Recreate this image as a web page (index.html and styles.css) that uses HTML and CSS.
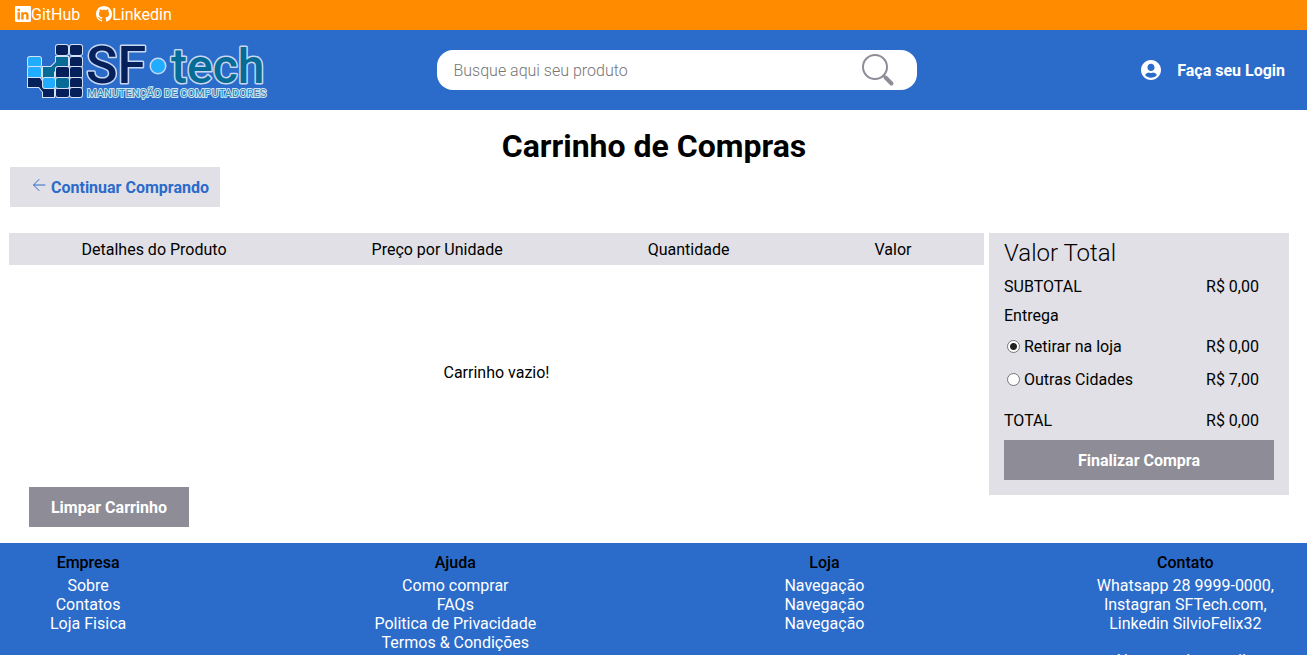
FILE: index.html
```html
<!DOCTYPE html>
<html lang="pt-BR">
<head>
<meta charset="utf-8">
<meta name="viewport" content="width=device-width, initial-scale=1">
<title>SF Tech - Carrinho de Compras</title>
<link rel="stylesheet" href="styles.css">
</head>
<body>
<nav class="social-bar">
  <a class="social-link" href="#github">
    <svg width="16" height="16" viewBox="0 0 16 16" fill="currentColor" aria-hidden="true"><path d="M0 1.146C0 .513.526 0 1.175 0h13.65C15.474 0 16 .513 16 1.146v13.708c0 .633-.526 1.146-1.175 1.146H1.175C.526 16 0 15.487 0 14.854V1.146zm4.943 12.248V6.169H2.542v7.225h2.401zm-1.2-8.212c.837 0 1.358-.554 1.358-1.248-.015-.709-.52-1.248-1.342-1.248-.822 0-1.359.54-1.359 1.248 0 .694.521 1.248 1.327 1.248h.016zm4.908 8.212V9.359c0-.216.016-.432.08-.586.173-.431.568-.878 1.232-.878.869 0 1.216.662 1.216 1.634v3.865h2.401V9.25c0-2.22-1.184-3.252-2.764-3.252-1.274 0-1.845.7-2.165 1.193v.025h-.016a5.54 5.54 0 0 1 .016-.025V6.169h-2.4c.03.678 0 7.225 0 7.225h2.4z"/></svg>
    <span>GitHub</span>
  </a>
  <a class="social-link" href="#linkedin">
    <svg width="16" height="16" viewBox="0 0 16 16" fill="currentColor" aria-hidden="true"><path d="M8 0C3.58 0 0 3.58 0 8c0 3.54 2.29 6.53 5.47 7.59.4.07.55-.17.55-.38 0-.19-.01-.82-.01-1.49-2.01.37-2.53-.49-2.69-.94-.09-.23-.48-.94-.82-1.13-.28-.15-.68-.52-.01-.53.63-.01 1.08.58 1.23.82.72 1.21 1.87.87 2.33.66.07-.52.28-.87.51-1.07-1.78-.2-3.64-.89-3.64-3.95 0-.87.31-1.59.82-2.15-.08-.2-.36-1.02.08-2.12 0 0 .67-.21 2.2.82.64-.18 1.32-.27 2-.27.68 0 1.36.09 2 .27 1.53-1.04 2.2-.82 2.2-.82.44 1.1.16 1.92.08 2.12.51.56.82 1.27.82 2.15 0 3.07-1.87 3.75-3.65 3.95.29.25.54.73.54 1.48 0 1.07-.01 1.93-.01 2.2 0 .21.15.46.55.38A8.012 8.012 0 0 0 16 8c0-4.42-3.58-8-8-8z"/></svg>
    <span>Linkedin</span>
  </a>
</nav>

<header class="header">
  <a class="logo" href="#inicio" aria-label="SF tech">
    <svg width="244" height="64" viewBox="24 38 244 64">
      <g class="logo-tiles">
        <g class="logo-light"><rect x="28" y="57" width="13" height="10" rx="2"/><rect x="28" y="67" width="13" height="11" rx="2"/></g>
        <path class="logo-navy" d="M28 78h12l5 8v2h9v9H43v-5l-4-5H28z"/>
        <path class="logo-teal" d="M43 67h8l5-5v-5h12v10h-9l-5 5v6H43z"/>
        <rect class="logo-light" x="43" y="78" width="12" height="10" rx="2"/>
        <g class="logo-navy"><rect x="56" y="45" width="12" height="10" rx="2"/><rect x="70" y="45" width="12" height="10" rx="2"/><rect x="70" y="57" width="12" height="10" rx="2"/><rect x="56" y="67" width="13" height="11" rx="2"/><rect x="70" y="67" width="12" height="11" rx="2"/><rect x="70" y="78" width="12" height="10" rx="2"/><rect x="56" y="88" width="13" height="9" rx="2"/><rect x="70" y="88" width="12" height="9" rx="2"/></g>
        <rect class="logo-teal" x="56" y="78" width="13" height="10" rx="2"/>
      </g>
      <text class="logo-word logo-navy" x="86" y="83" font-size="52">SF</text>
      <circle class="logo-dot logo-light" cx="158" cy="66" r="7"/>
      <text class="logo-word logo-teal" x="171" y="83" font-size="48">tech</text>
      <text class="logo-tag" x="87" y="97" font-size="11">MANUTENÇÃO DE COMPUTADORES</text>
    </svg>
  </a>
  <form class="search" role="search">
    <input class="search-input" type="search" placeholder="Busque aqui seu produto" aria-label="Busque aqui seu produto">
    <button class="search-button" type="button" aria-label="Buscar">
      <svg width="34" height="34" viewBox="0 0 34 34" fill="none" stroke="currentColor" stroke-linecap="round" aria-hidden="true"><circle cx="14" cy="14" r="12" stroke-width="2"/><path d="M22.500 22.500L24 24" stroke-width="2"/><path d="M24.500 24.500l6 6" stroke-width="4"/></svg>
    </button>
  </form>
  <a class="login" href="#login">
    <svg width="20" height="20" viewBox="0 8 496 496" fill="currentColor" aria-hidden="true"><path d="M248 8C111 8 0 119 0 256s111 248 248 248 248-111 248-248S385 8 248 8zm0 96c48.600 0 88 39.400 88 88s-39.400 88-88 88-88-39.400-88-88 39.400-88 88-88zm0 344c-58.700 0-111.300-26.600-146.500-68.200 18.800-35.400 55.600-59.800 98.500-59.800 2.400 0 4.800.4 7.100 1.100 13 4.200 26.600 6.900 40.900 6.900 14.300 0 28-2.700 40.900-6.900 2.300-.7 4.700-1.100 7.100-1.100 42.900 0 79.700 24.400 98.500 59.800C359.300 421.400 306.700 448 248 448z"/></svg>
    <span>Faça seu Login</span>
  </a>
</header>

<main class="main">
  <h1 class="title">Carrinho de Compras</h1>
  <a class="continue" href="#produtos">
    <svg class="continue-icon" width="16" height="16" viewBox="0 0 16 16" fill="none" stroke="currentColor" stroke-linecap="round" stroke-linejoin="round" aria-hidden="true"><path d="M14 8H3M8 2.500L2.500 8 8 13.500"/></svg>
    <span>Continuar Comprando</span>
  </a>
  <div class="cart">
    <section class="cart-list">
      <div class="cart-head">
        <span>Detalhes do Produto</span>
        <span>Preço por Unidade</span>
        <span>Quantidade</span>
        <span>Valor</span>
      </div>
      <p class="cart-empty">Carrinho vazio!</p>
      <button class="button button-clear" type="button">Limpar Carrinho</button>
    </section>
    <aside class="summary">
      <h2 class="summary-title">Valor Total</h2>
      <div class="summary-row"><span>SUBTOTAL</span><span>R$ 0,00</span></div>
      <p class="summary-label">Entrega</p>
      <div class="summary-row summary-option">
        <label class="option"><input class="radio" type="radio" name="entrega" checked><span>Retirar na loja</span></label>
        <span>R$ 0,00</span>
      </div>
      <div class="summary-row summary-option">
        <label class="option"><input class="radio" type="radio" name="entrega"><span>Outras Cidades</span></label>
        <span>R$ 7,00</span>
      </div>
      <div class="summary-row summary-total"><span>TOTAL</span><span>R$ 0,00</span></div>
      <button class="button button-checkout" type="button">Finalizar Compra</button>
    </aside>
  </div>
</main>

<footer class="footer">
  <div class="footer-col footer-nav">
    <h3 class="footer-title">Empresa</h3>
    <a href="#sobre">Sobre</a><a href="#contatos">Contatos</a><a href="#loja">Loja Fisica</a>
  </div>
  <div class="footer-col footer-nav">
    <h3 class="footer-title">Ajuda</h3>
    <a href="#comprar">Como comprar</a><a href="#faqs">FAQs</a><a href="#privacidade">Politica de Privacidade</a><a href="#termos">Termos &amp; Condições</a>
  </div>
  <div class="footer-col footer-nav">
    <h3 class="footer-title">Loja</h3>
    <a href="#nav1">Navegação</a><a href="#nav2">Navegação</a><a href="#nav3">Navegação</a>
  </div>
  <div class="footer-col">
    <h3 class="footer-title">Contato</h3>
    <span>Whatsapp 28 9999-0000,</span><span>Instagran SFTech.com,</span><span>Linkedin SilvioFelix32</span>
    <span class="footer-note">Nos mande e-mails</span>
  </div>
</footer>
</body>
</html>
```

FILE: styles.css
```css
* {
  box-sizing: border-box;
  margin: 0;
  padding: 0;
}

body {
  background: #fff;
  color: #000;
  font: 16px/19px Roboto, "Liberation Sans", sans-serif;
}

a {
  color: inherit;
  text-decoration: none;
}

button,
input {
  border: 0;
  font: inherit;
}

.social-bar {
  display: flex;
  gap: 16px;
  height: 30px;
  padding: 0 15px 2px;
  align-items: center;
  background: #ff8c00;
  color: #fff;
}

.social-link {
  display: flex;
  align-items: center;
}

.header {
  display: grid;
  grid-template-columns: 9fr 480px 8fr;
  align-items: center;
  height: 80px;
  padding: 0 22px 0 24px;
  background: #2b6bca;
  color: #fff;
}

.logo,
.logo svg {
  display: block;
}

.logo-tiles {
  stroke: #d5e2f5;
  stroke-width: 2;
  paint-order: stroke;
}

.logo-navy {
  fill: #06205c;
}

.logo-teal {
  fill: #066c96;
}

.logo-light {
  fill: #20acff;
}

.logo-dot,
.logo-word {
  paint-order: stroke;
  stroke: #c6d8f2;
  stroke-width: 3;
  stroke-linejoin: round;
}

.logo-word {
  font-weight: 500;
}

.logo-tag {
  fill: #2a86b4;
  paint-order: stroke;
  stroke: #d0e6f6;
  stroke-width: 2;
  stroke-linejoin: round;
}

.search {
  display: flex;
  align-items: center;
  height: 40px;
  padding: 0 22px 0 16px;
  border-radius: 16px;
  background: #fff;
}

.search-input {
  flex: 1;
  min-width: 0;
  height: 40px;
  outline: 0;
  background: none;
  font-weight: 300;
}

.search-input::placeholder {
  color: #757575;
}

.search-button {
  display: flex;
  background: none;
  color: #8d8c97;
}

.login {
  display: flex;
  align-items: center;
  justify-self: end;
  gap: 16px;
  font-weight: 700;
}

.main {
  padding: 17px 18px 16px 9px;
}

.title {
  font-size: 32px;
  line-height: 38px;
  margin-bottom: 2px;
  text-align: center;
  padding-left: 10px;
}

.continue {
  display: inline-flex;
  align-items: center;
  gap: 4px;
  height: 40px;
  margin-left: 1px;
  padding: 0 11px 0 21px;
  background: #e1e0e6;
  color: #2b6bca;
  font-weight: 700;
}

.continue-icon {
  margin-bottom: 4px;
}

.cart {
  display: flex;
  align-items: flex-start;
  gap: 5px;
  margin-top: 26px;
}

.cart-list {
  flex: 1;
}

.cart-head {
  display: flex;
  align-items: center;
  justify-content: space-around;
  height: 32px;
  background: #e1e0e6;
}

.cart-empty {
  padding: 98px 0 105px;
  text-align: center;
}

.button {
  height: 40px;
  background: #8d8c97;
  color: #fff;
  font-weight: 700;
}

.button-clear {
  width: 160px;
  margin-left: 20px;
}

.summary {
  width: 300px;
  padding: 5px 15px 15px;
  background: #e1e0e6;
}

.summary-title {
  font-size: 24px;
  font-weight: 300;
  line-height: 30px;
}

.summary-row {
  display: flex;
  align-items: center;
  justify-content: space-between;
  height: 37px;
  padding-right: 15px;
}

.summary-label {
  margin: 1px 0 5px;
}

.summary-option {
  height: 33px;
}

.summary-total {
  height: 40px;
  margin-top: 4px;
}

.option {
  display: flex;
  align-items: center;
  gap: 4px;
}

.radio {
  appearance: none;
  width: 13px;
  height: 13px;
  margin-left: 3px;
  border: 1px solid #767676;
  border-radius: 50%;
  background: #fff;
}

.radio:checked {
  background: radial-gradient(circle, #222 3px, #fff 4px);
}

.button-checkout {
  width: 100%;
}

.footer {
  display: flex;
  justify-content: space-between;
  padding: 10px 33px 10px 50px;
  background: #2b6bca;
  color: #fff;
}

.footer-col {
  display: flex;
  flex-direction: column;
  align-items: center;
}

.footer-nav + .footer-nav {
  margin-left: 16px;
}

.footer-title {
  margin-bottom: 4px;
  color: #000;
  font-size: 16px;
  font-weight: 500;
}

.footer-note {
  margin-top: 18px;
}
```
